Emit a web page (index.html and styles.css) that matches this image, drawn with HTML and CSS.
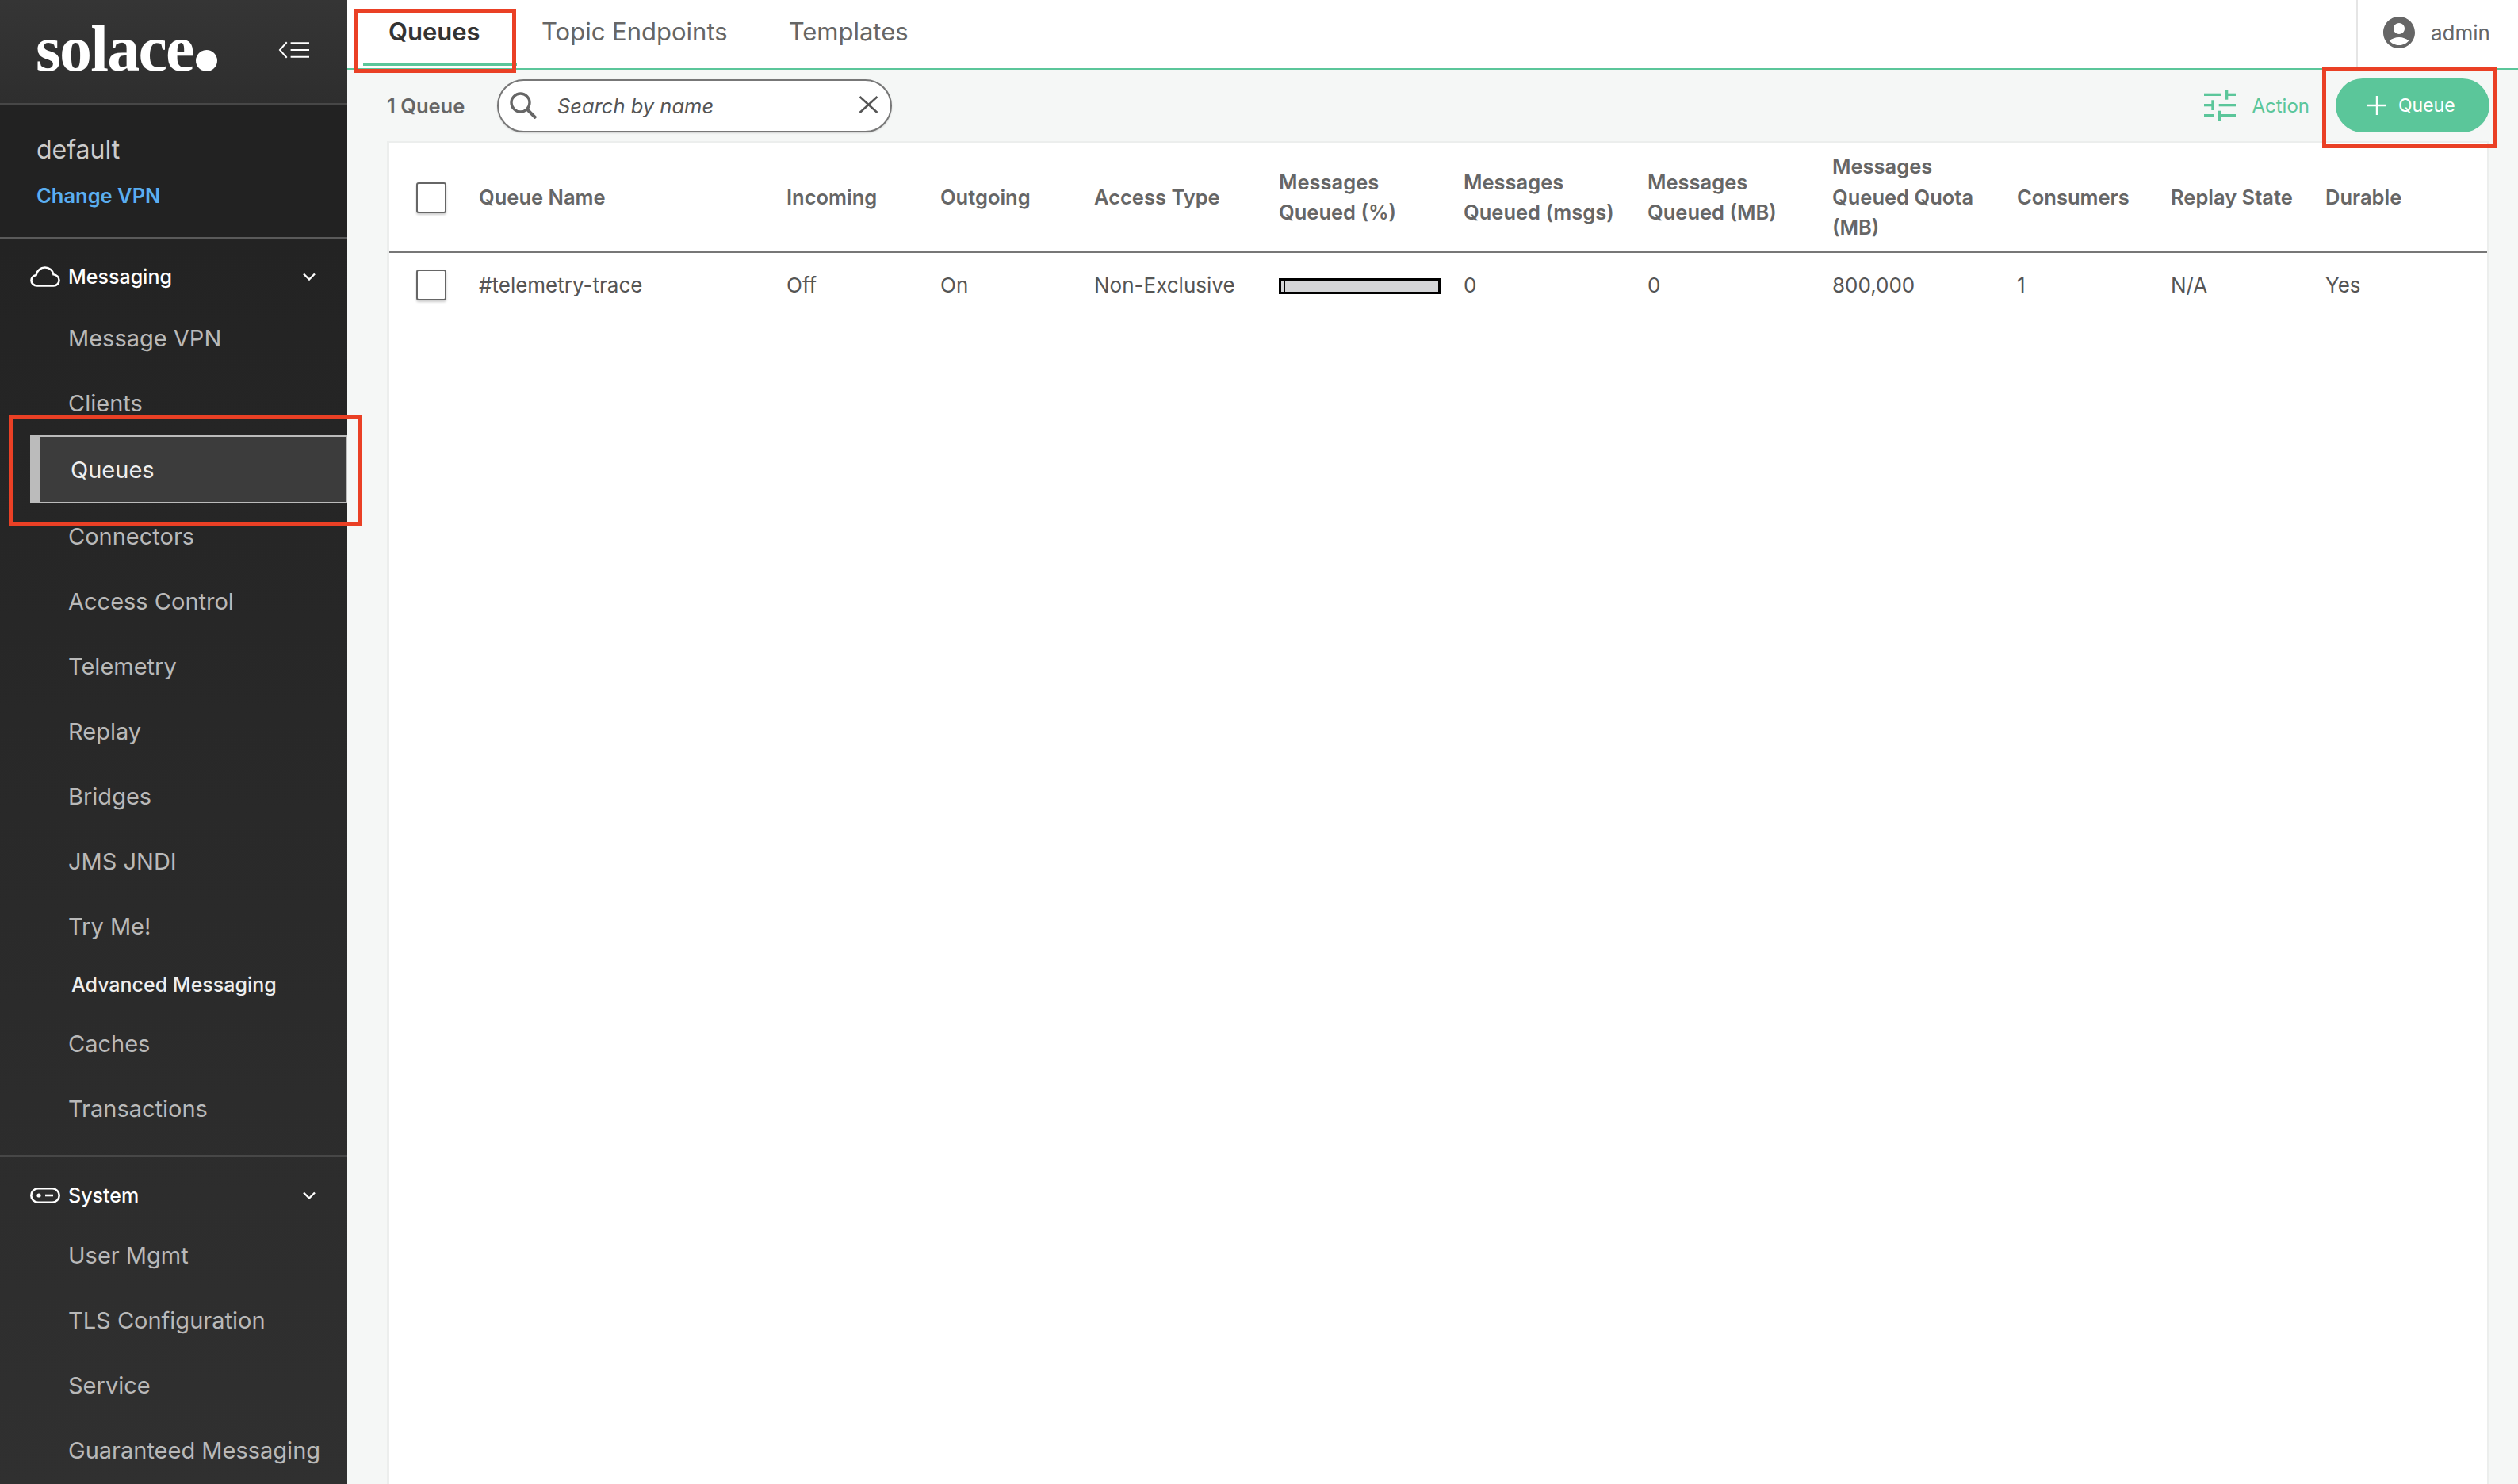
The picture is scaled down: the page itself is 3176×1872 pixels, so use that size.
FILE: index.html
```html
<!DOCTYPE html>
<html lang="en">
<head>
<meta charset="utf-8">
<title>Queues</title>
<link rel="stylesheet" href="styles.css">
</head>
<body>
<div class="app">
  <aside class="sidebar">
    <div class="brand">
      <div class="logo"><span class="logo-word">solace</span><span class="logo-dot"></span></div>
      <svg class="collapse" viewBox="0 0 40 22" fill="none" stroke="#fff" stroke-width="2"><path d="M11 1 2 11l9 10"/><path d="M16 2h24M16 11h24M16 20h24"/></svg>
    </div>
    <div class="vpn">
      <div class="vpn-name">default</div>
      <div class="vpn-change">Change VPN</div>
    </div>
    <nav class="nav">
      <section class="nav-section first">
        <div class="nav-head">
          <svg class="nav-icon" viewBox="0 0 38 26" fill="none" stroke="#fff" stroke-width="2.6"><path d="M9 24.5C4.5 24.5 1.5 21.5 1.5 17.8c0-3.5 2.6-6.2 6-6.7C9.2 5 13.6 1.5 18.8 1.5c5.4 0 9.6 3.6 10.7 8.8 3.9.5 7 3.4 7 7.3 0 3.900-3 6.900-7 6.900z"/></svg>
          <span class="nav-title">Messaging</span>
          <svg class="chev" viewBox="0 0 16 10" fill="none" stroke="#fff" stroke-width="2.400"><path d="M1 1.500l7 7 7-7"/></svg>
        </div>
        <a class="nav-item">Message VPN</a>
        <a class="nav-item">Clients</a>
        <a class="nav-item active">Queues</a>
        <a class="nav-item">Connectors</a>
        <a class="nav-item">Access Control</a>
        <a class="nav-item">Telemetry</a>
        <a class="nav-item">Replay</a>
        <a class="nav-item">Bridges</a>
        <a class="nav-item">JMS JNDI</a>
        <a class="nav-item">Try Me!</a>
        <div class="nav-sub">Advanced Messaging</div>
        <a class="nav-item">Caches</a>
        <a class="nav-item">Transactions</a>
      </section>
      <section class="nav-section">
        <div class="nav-head">
          <svg class="nav-icon sys" viewBox="0 0 38 20" fill="none" stroke="#fff" stroke-width="2.600"><rect x="1.300" y="1.300" width="35.400" height="17.400" rx="8.700"/><circle cx="11" cy="10" r="2.600" fill="#fff" stroke="none"/><path d="M19 10h10"/></svg>
          <span class="nav-title">System</span>
          <svg class="chev" viewBox="0 0 16 10" fill="none" stroke="#fff" stroke-width="2.400"><path d="M1 1.500l7 7 7-7"/></svg>
        </div>
        <a class="nav-item">User Mgmt</a>
        <a class="nav-item">TLS Configuration</a>
        <a class="nav-item">Service</a>
        <a class="nav-item">Guaranteed Messaging</a>
      </section>
    </nav>
  </aside>

  <main class="main">
    <header class="topbar">
      <div class="tabs">
        <div class="tab active">Queues</div>
        <div class="tab">Topic Endpoints</div>
        <div class="tab">Templates</div>
      </div>
      <div class="user">
        <svg class="user-icon" viewBox="2 2 20 20" fill="#666"><path d="M12 2C6.480 2 2 6.480 2 12s4.480 10 10 10 10-4.480 10-10S17.520 2 12 2zm0 4c1.930 0 3.500 1.570 3.500 3.500S13.930 13 12 13s-3.500-1.570-3.500-3.500S10.070 6 12 6zm0 14c-2.030 0-4.430-.82-6.140-2.880C7.550 15.800 9.680 15 12 15s4.450.8 6.140 2.120C16.430 19.180 14.030 20 12 20z"/></svg>
        <span>admin</span>
      </div>
    </header>

    <div class="toolbar">
      <span class="count">1 Queue</span>
      <div class="search">
        <svg class="search-icon" viewBox="0 0 34 34" fill="none" stroke="#666" stroke-width="3.400"><circle cx="13.500" cy="13.500" r="11.500"/><path d="M22 22l11 11" stroke-width="4"/></svg>
        <span class="placeholder">Search by name</span>
        <svg class="clear" viewBox="0 0 25 22" fill="none" stroke="#555" stroke-width="2.600"><path d="M1.500 1l22 20M23.500 1l-22 20"/></svg>
      </div>
      <div class="actions">
        <div class="action">
          <svg class="tune" viewBox="0 0 40 40" fill="#5bc69a"><rect x="0" y="4.700" width="22" height="3.300"/><rect x="27" y="0" width="3.300" height="12.700"/><rect x="30" y="4.700" width="10" height="3.300"/><rect x="0" y="18" width="13" height="3.300"/><rect x="9.300" y="13.300" width="3.300" height="12.700"/><rect x="18.700" y="18" width="21.300" height="3.300"/><rect x="0" y="31" width="13" height="3.300"/><rect x="18" y="26.700" width="3.300" height="13.300"/><rect x="21" y="31" width="19" height="3.300"/></svg>
          <span>Action</span>
        </div>
        <button class="add">
          <svg class="plus" viewBox="0 0 24 24" fill="none" stroke="#fff" stroke-width="2.400"><path d="M12 0v24M0 12h24"/></svg>
          <span>Queue</span>
        </button>
      </div>
    </div>

    <div class="card">
      <div class="grid head">
        <span class="check"></span>
        <span>Queue Name</span>
        <span>Incoming</span>
        <span>Outgoing</span>
        <span>Access Type</span>
        <span>Messages<br>Queued (%)</span>
        <span>Messages<br>Queued (msgs)</span>
        <span>Messages<br>Queued (MB)</span>
        <span>Messages<br>Queued Quota<br>(MB)</span>
        <span>Consumers</span>
        <span>Replay State</span>
        <span>Durable</span>
      </div>
      <div class="grid row">
        <span class="check"></span>
        <span>#telemetry-trace</span>
        <span>Off</span>
        <span>On</span>
        <span>Non-Exclusive</span>
        <span class="bar"><span class="bar-fill"></span></span>
        <span>0</span>
        <span>0</span>
        <span>800,000</span>
        <span>1</span>
        <span>N/A</span>
        <span>Yes</span>
      </div>
    </div>
  </main>

  <div class="mark mark-tab"></div>
  <div class="mark mark-nav"></div>
  <div class="mark mark-add"></div>
</div>
</body>
</html>
```
FILE: styles.css
```css
* { box-sizing: border-box; }
html, body { margin: 0; height: 100%; }
body { font-family: "Inter", "Noto Sans", sans-serif; background: #f5f7f6; overflow: hidden; }
.app { position: relative; display: flex; width: 3176px; height: 1872px; overflow: hidden; }

/* Sidebar */
.sidebar { width: 438px; flex: none; display: flex; flex-direction: column; background: #222; color: #bbb; }
.brand { height: 132px; flex: none; display: flex; align-items: flex-start; background: linear-gradient(#353535, #2e2e2e); border-bottom: 2px solid #474747; padding: 30px 48px 0 45px; justify-content: space-between; }
.logo { display: flex; align-items: flex-end; height: 64px; }
.logo-word { font-family: "Liberation Serif", serif; font-weight: 700; font-size: 82px; line-height: 64px; letter-spacing: -1.800px; color: #fff; }
.logo-dot { width: 27px; height: 27px; margin: 0 0 4px 3px; border-radius: 50%; background: #fff; }
.collapse { width: 39px; height: 22px; margin-top: 22px; }
.vpn { height: 169px; flex: none; background: #222; border-bottom: 2px solid #5a5a5a; padding: 35px 46px 0; }
.vpn-name { font-size: 32px; line-height: 44px; color: #ccc; }
.vpn-change { margin-top: 18px; font-size: 25.500px; font-weight: 600; line-height: 36px; color: #5aaef0; }
.nav { flex: 1; min-height: 0; display: flex; flex-direction: column; background: linear-gradient(#232323, #303030); }
.nav-section { padding-top: 25px; }
.nav-section.first { padding-top: 24px; padding-bottom: 18px; border-bottom: 2px solid #474747; }
.nav-head { height: 48px; margin-bottom: 10px; display: flex; align-items: center; padding: 0 40px 0 38px; color: #fff; }
.nav-section.first .nav-head { margin-bottom: 12px; }
.nav-icon { width: 38px; height: 26px; flex: none; }
.nav-icon.sys { height: 20px; }
.nav-title { margin-left: 10px; flex: 1; font-size: 25px; font-weight: 500; }
.chev { width: 16px; height: 10px; flex: none; }
.nav-item { display: flex; align-items: center; height: 82px; padding-left: 86px; font-size: 29px; color: #b9b9b9; white-space: nowrap; }
.nav-item.active { height: 86px; margin-left: 38px; padding-left: 39px; color: #eee; background: #3c3c3c; border: 2px solid #bbb; border-left-width: 12px; border-right-width: 2px; }
.nav-sub { display: flex; align-items: center; height: 66px; padding-left: 90px; font-size: 25px; font-weight: 500; color: #eee; }

/* Main */
.main { flex: 1; min-width: 0; display: flex; flex-direction: column; }
.topbar { height: 88px; flex: none; display: flex; justify-content: space-between; background: #fff; border-bottom: 2px solid #5bc69a; }
.tabs { display: flex; margin-left: 14px; }
.tab { position: relative; height: 86px; padding: 0 37px 8px; margin-right: 3px; display: flex; align-items: center; font-size: 31px; color: #666; }
.tab.active { width: 194px; margin-left: 6px; padding: 0 0 8px 32px; font-weight: 600; color: #333; margin-right: -6px; }
.tab.active::after { content: ""; position: absolute; left: 0; right: 0; bottom: 3px; height: 4px; background: #5bc69a; }
.user { width: 204px; display: flex; align-items: center; gap: 20px; padding-left: 32px; padding-bottom: 4px; border-left: 2px solid #e5e5e5; font-size: 26px; color: #666; }
.user-icon { width: 40px; height: 40px; flex: none; }

.toolbar { height: 90px; flex: none; display: flex; align-items: center; padding: 0 36px 0 50px; }
.count { width: 139px; font-size: 25.500px; font-weight: 600; color: #666; }
.search { width: 498px; height: 67px; display: flex; align-items: center; padding: 0 15px 0 14px; background: #fff; border: 2px solid #777; border-radius: 34px; box-shadow: 0 1px 2px rgba(0,0,0,.15); }
.search-icon { width: 34px; height: 34px; flex: none; }
.placeholder { flex: 1; margin-left: 26px; font-size: 25.500px; font-style: italic; color: #555; }
.clear { width: 25px; height: 22px; flex: none; margin-bottom: 3px; }
.actions { margin-left: auto; display: flex; align-items: center; }
.action { display: flex; align-items: center; gap: 20px; margin-right: 33px; font-size: 24px; color: #5bc69a; }
.tune { width: 40px; height: 40px; flex: none; }
.add { width: 194px; height: 68px; display: flex; align-items: center; gap: 15px; padding: 0 0 0 40px; border: 0; border-radius: 34px; background: #5bc69a; color: #fff; font: 400 23px "Inter", sans-serif; }
.plus { width: 24px; height: 24px; flex: none; }

.card { flex: 1; min-height: 0; margin: 0 36px 0 50px; background: #fff; border: 3px solid #eceeed; border-bottom: 0; }
.grid { display: grid; grid-template-columns: 79px 388px 194px 194px 233px 233px 232px 233px 233px 194px 195px 1fr; align-items: center; padding-left: 34px; color: #5c5c5c; }
.head { height: 138px; border-bottom: 2px solid #777; font-size: 25.500px; font-weight: 600; line-height: 38.500px; color: #666; }
.row { height: 80px; font-size: 26px; color: #555; }
.check { display: block; width: 38px; height: 39px; background: #fff; border: 2px solid #666; border-radius: 3px; box-shadow: 0 2px 3px rgba(0,0,0,.2); }
.bar { display: block; width: 204px; height: 20px; margin-top: 4px; background: #d4d5d7; border: 3px solid #000; }
.bar-fill { display: block; width: 5px; height: 100%; border-right: 2px solid #000; }

/* Annotation rectangles drawn over the screenshot */
.mark { position: absolute; border: 5px solid #ea4025; pointer-events: none; }
.mark-tab { left: 447px; top: 11px; width: 204px; height: 81px; }
.mark-nav { left: 11px; top: 524px; width: 445px; height: 140px; }
.mark-add { left: 2929px; top: 85px; width: 220px; height: 102px; }
```
